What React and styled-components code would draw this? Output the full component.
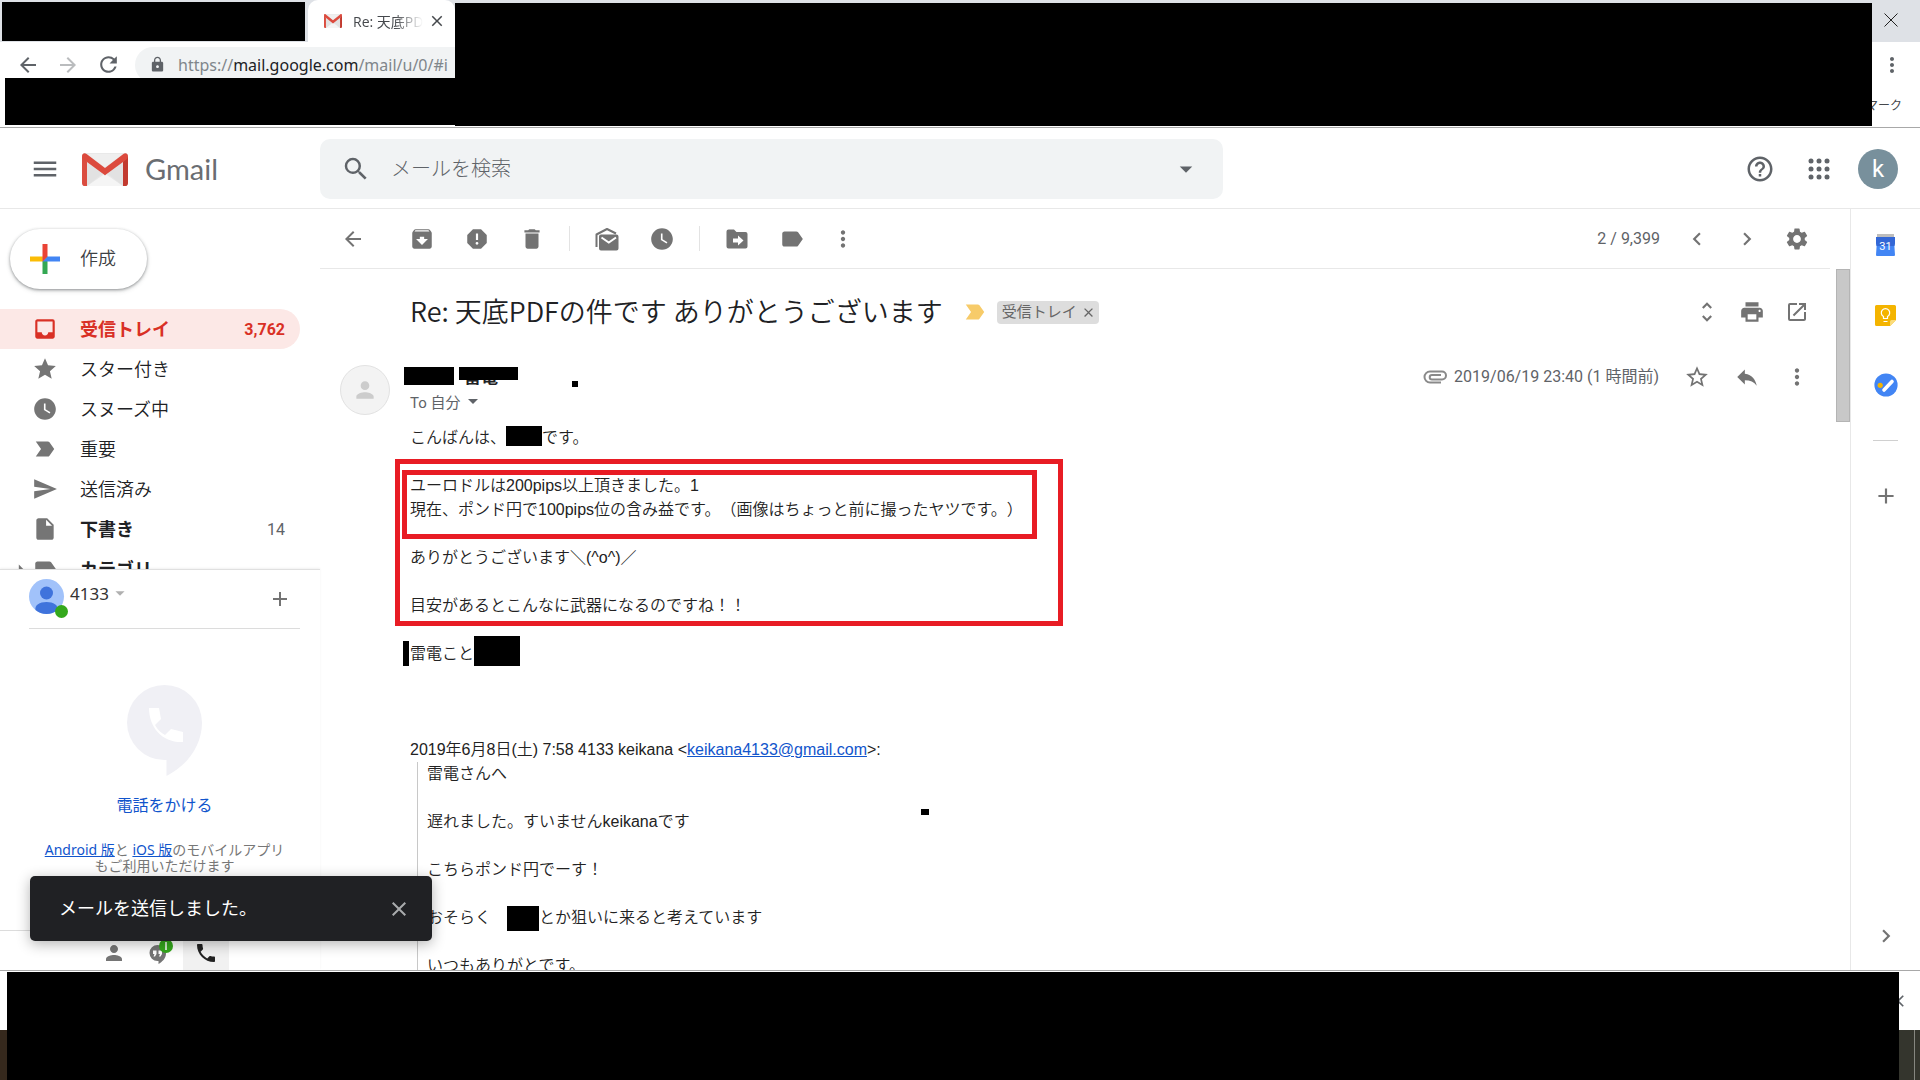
import React from "react";
import styled, { createGlobalStyle } from "styled-components";
import {
    MdAdd, MdArchive, MdArrowBack, MdArrowDropDown, MdArrowForward, MdArrowRight, MdChevronLeft,
    MdChevronRight, MdClose, MdDelete, MdHelpOutline, MdInbox, MdInsertDriveFile, MdLabel,
    MdLabelImportant, MdLock, MdMenu, MdMoreVert, MdOpenInNew, MdPerson, MdPhone, MdPrint,
    MdRefresh, MdReply, MdReport, MdSearch, MdSend, MdSettings, MdStar, MdStarBorder,
    MdUnfoldMore, MdWatchLater,
} from "react-icons/md";

const GlobalStyle = createGlobalStyle`
    * {
        box-sizing: border-box;
    }
    body {
        margin: 0;
        background-color: white;
        color: #202124;
        font-family: Roboto, "Noto Sans CJK JP", sans-serif;
    }
    button, input {
        font-family: inherit;
    }
    a {
        color: #1155cc;
    }
`;

const Page = styled.div`
    position: relative;
    display: flex;
    flex-direction: column;
    height: 100vh;
    overflow: hidden;
`;
const Redaction = styled.span`
    position: absolute;
    background-color: black;
    left: ${(p) => p.$left}px;
    top: ${(p) => p.$top}px;
    width: ${(p) => (p.$width ? `${p.$width}px` : 'auto')};
    height: ${(p) => (p.$height ? `${p.$height}px` : 'auto')};
    right: ${(p) => (p.$right ? `${p.$right}px` : 'auto')};
    bottom: ${(p) => (p.$bottom !== undefined ? `${p.$bottom}px` : 'auto')};
`;
const InlineRedaction = styled.span`
    display: inline-block;
    vertical-align: top;
    background-color: black;
    width: ${(p) => p.$width}px;
    height: ${(p) => p.$height}px;
    margin-top: ${(p) => (p.$tall ? -6 : 0)}px;
`;
const IconButton = styled.button`
    display: flex;
    align-items: center;
    justify-content: center;
    flex: none;
    width: ${(p) => p.$width || 40}px;
    height: 40px;
    padding: 0;
    border: none;
    background: none;
    color: ${(p) => p.$color || '#737373'};
    font-size: ${(p) => p.$size || 26}px;
`;

/* browser frame */
const Browser = styled.div`
    position: relative;
    flex: none;
    border-bottom: 1px solid #a8a8a8;
`;
const TabStrip = styled.div`
    display: flex;
    justify-content: space-between;
    height: 42px;
    padding-left: 308px;
    background-color: #dee1e6;
`;
const Tab = styled.div`
    display: flex;
    align-items: center;
    width: 147px;
    padding-left: 16px;
    border-radius: 10px 10px 0 0;
    background-color: white;
`;
const TabTitle = styled.span`
    width: 70px;
    margin-left: 11px;
    overflow: hidden;
    white-space: nowrap;
    font-family: "Open Sans", "Noto Sans CJK JP", sans-serif;
    font-size: 14px;
    color: #45484c;
    mask-image: linear-gradient(to right, black 60%, transparent);
`;
const NavBar = styled.div`
    display: flex;
    align-items: center;
    height: 45px;
    padding: 0 8px;
`;
const NavButtons = styled.div`
    display: flex;
    width: 127px;
`;
const AddressBar = styled.div`
    display: flex;
    align-items: center;
    flex: 1;
    height: 36px;
    padding-left: 14px;
    margin-right: 60px;
    border-radius: 18px;
    background-color: #f1f3f4;
    color: #5f6368;
    font-family: "Noto Sans", sans-serif;
    font-size: 16px;
`;
const Url = styled.span`
    margin-left: 12px;
    color: #80868b;
`;
const Host = styled.span`
    color: #202124;
`;
const Bookmarks = styled.div`
    height: 40px;
    padding: 7px 18px;
    text-align: right;
    font-family: "Noto Sans CJK JP", sans-serif;
    font-size: 12px;
    line-height: 22px;
    color: #45484c;
`;

/* header */
const Header = styled.header`
    display: flex;
    align-items: center;
    flex: none;
    height: 81px;
    padding: 2px 22px 0 0;
    border-bottom: 1px solid #e8e8e8;
`;
const Brand = styled.div`
    display: flex;
    align-items: center;
    flex: none;
    gap: 17px;
    width: 320px;
    padding-left: 25px;
`;
const BrandName = styled.span`
    font-family: Lato, sans-serif;
    font-size: 29px;
    line-height: 34px;
    color: #6a6d72;
`;
const Search = styled.form`
    display: flex;
    align-items: center;
    flex: 0 1 903px;
    height: 60px;
    padding: 0 17px 0 16px;
    border-radius: 10px;
    background-color: #f1f3f4;
`;
const SearchInput = styled.input`
    flex: 1;
    min-width: 0;
    margin-left: 13px;
    border: none;
    outline: none;
    background: none;
    font-size: 20px;
    font-weight: 300;
    &::placeholder {
        color: #5f6368;
    }
`;
const Account = styled.div`
    display: flex;
    align-items: center;
    gap: 19px;
    margin-left: auto;
`;
const AccountButton = styled.button`
    width: 40px;
    height: 40px;
    padding: 0;
    border: none;
    border-radius: 50%;
    background-color: #78909c;
    color: white;
    font-size: 24px;
`;

const Main = styled.div`
    position: relative;
    display: flex;
    flex: 1;
    min-height: 0;
`;

/* left column */
const Sidebar = styled.aside`
    display: flex;
    flex-direction: column;
    flex: none;
    width: 320px;
    padding-top: 20px;
`;
const Compose = styled.button`
    display: flex;
    align-items: center;
    flex: none;
    gap: 20px;
    width: 137px;
    height: 60px;
    margin: 0 0 20px 10px;
    padding: 0 20px;
    border: none;
    border-radius: 30px;
    background-color: white;
    box-shadow: 0 1px 3px rgba(60, 64, 67, 0.5), 0 2px 5px rgba(60, 64, 67, 0.15);
    color: #3c4043;
    font-size: 18px;
    font-weight: 350;
    line-height: 24px;
    white-space: nowrap;
    svg {
        flex: none;
    }
`;
const Folders = styled.nav`
    flex: 1;
    min-height: 0;
    overflow: hidden;
`;
const Folder = styled.a`
    display: flex;
    align-items: center;
    position: relative;
    height: 40px;
    margin-right: 20px;
    padding: 0 15px 0 32px;
    border-radius: 0 20px 20px 0;
    background-color: ${(p) => (p.$active ? '#fce8e6' : 'transparent')};
    color: ${(p) => (p.$active ? '#d93025' : '#202124')};
    font-size: 18px;
    font-weight: ${(p) => (p.$bold ? 700 : 350)};
    text-decoration: none;
    svg {
        flex: none;
        font-size: 26px;
        color: ${(p) => (p.$active ? '#d93025' : '#757575')};
    }
`;
const FolderName = styled.span`
    flex: 1;
    margin-left: 22px;
    padding-bottom: 2px;
`;
const Count = styled.span`
    font-size: 16px;
    font-weight: ${(p) => (p.$strong ? 700 : 400)};
    color: ${(p) => (p.$strong ? '#d93025' : '#5f6368')};
`;
const Expander = styled.span`
    position: absolute;
    left: 8px;
    top: 8px;
`;
const Hangouts = styled.section`
    flex: none;
    border-top: 1px solid #e0e0e0;
    box-shadow: 0 -1px 2px rgba(0, 0, 0, 0.06);
`;
const ChatUser = styled.div`
    display: flex;
    height: 59px;
    margin: 0 20px 0 29px;
    border-bottom: 1px solid #dcdcdc;
`;
const ChatAvatar = styled.svg`
    flex: none;
    margin-top: 9px;
`;
const ChatName = styled.button`
    display: flex;
    align-items: center;
    align-self: flex-start;
    height: 24px;
    margin: 11px auto 0 0;
    padding: 0;
    border: none;
    background: none;
    font-family: "Noto Sans", sans-serif;
    font-size: 17px;
    color: #333333;
    svg {
        color: #b0b0b0;
    }
`;
const AddChat = styled(IconButton)`
    margin-top: 9px;
`;
const CallPanel = styled.div`
    display: flex;
    flex-direction: column;
    align-items: center;
    height: 301px;
    padding: 56px 20px 0 29px;
    font-family: "Noto Sans", "Noto Sans CJK JP", sans-serif;
`;
const CallLink = styled.a`
    margin: 18px 0 27px;
    font-size: 16px;
    line-height: 20px;
    text-decoration: none;
`;
const CallText = styled.p`
    margin: 0;
    text-align: center;
    font-size: 14px;
    line-height: 16px;
    color: #777777;
`;
const ChatTabs = styled.div`
    display: flex;
    justify-content: center;
    height: 40px;
    border-top: 1px solid #dcdcdc;
`;
const ChatTab = styled.button`
    display: flex;
    align-items: center;
    justify-content: center;
    width: 46px;
    padding: 4px 0 0;
    border: none;
    background-color: ${(p) => (p.$active ? '#f1f1f1' : 'transparent')};
    color: ${(p) => (p.$active ? '#222222' : '#757575')};
    font-size: 24px;
`;

/* message */
const Content = styled.main`
    display: flex;
    flex-direction: column;
    flex: 1;
    min-width: 0;
`;
const Toolbar = styled.div`
    display: flex;
    align-items: center;
    flex: none;
    gap: 15px;
    height: 60px;
    margin-right: 20px;
    padding: 0 13px;
    border-bottom: 1px solid #e8e8e8;
`;
const BackButton = styled(IconButton)`
    margin-right: 14px;
`;
const Divider = styled.span`
    width: 1px;
    height: 25px;
    margin: 0 2px;
    background-color: #e3e3e3;
`;
const Pager = styled.div`
    display: flex;
    align-items: center;
    gap: 10px;
    margin-left: auto;
    font-size: 16px;
    color: #5f6368;
`;
const PagerCount = styled.span`
    margin-right: 7px;
`;
const Scroller = styled.div`
    display: flex;
    flex: 1;
    min-height: 0;
    overflow: hidden;
`;
const Thumb = styled.div`
    flex: none;
    width: 14px;
    height: 153px;
    border: 1px solid #b4b4b4;
    background-color: #c8c8c8;
`;
const Message = styled.article`
    flex: 1;
    min-width: 0;
    padding: 0 19px 0 20px;
`;
const SubjectRow = styled.div`
    display: flex;
    align-items: center;
    height: 86px;
    padding-left: 70px;
    svg {
        flex: none;
    }
`;
const Subject = styled.h2`
    margin: 0 19px 0 0;
    padding-bottom: 2px;
    font-family: "Noto Sans CJK JP", sans-serif;
    font-size: 27px;
    font-weight: 350;
    line-height: 36px;
    white-space: nowrap;
`;
const Tag = styled.span`
    display: flex;
    align-items: center;
    gap: 4px;
    height: 23px;
    margin-left: 9px;
    padding: 0 3px 0 5px;
    border-radius: 4px;
    background-color: #dddddd;
    color: #666666;
    font-size: 15px;
    line-height: 20px;
    white-space: nowrap;
`;
const TagRemove = styled.button`
    display: flex;
    padding: 0;
    border: none;
    background: none;
    color: #666666;
    font-size: 15px;
`;
const Actions = styled.div`
    display: flex;
    gap: ${(p) => p.$gap}px;
    margin-left: auto;
`;
const MessageHead = styled.div`
    display: flex;
    height: 71px;
    padding-top: 10px;
`;
const Avatar = styled.div`
    display: flex;
    align-items: center;
    justify-content: center;
    flex: none;
    width: 50px;
    height: 50px;
    margin-right: 20px;
    border: 1px solid #e2e2e2;
    border-radius: 50%;
    background-color: #f3f3f3;
    color: #cccccc;
`;
const Sender = styled.div`
    position: relative;
`;
const SenderName = styled.div`
    height: 24px;
    padding-left: 54px;
    font-size: 17px;
    font-weight: 700;
    line-height: 24px;
`;
const Recipient = styled.button`
    display: flex;
    align-items: center;
    height: 24px;
    padding: 0;
    border: none;
    background: none;
    color: #5f6368;
    font-size: 15px;
`;
const Meta = styled.div`
    display: flex;
    align-items: center;
    height: 24px;
    margin-left: auto;
    color: #5f6368;
    font-size: 16px;
`;
const MetaDate = styled.time`
    margin: 0 18px 0 7px;
    line-height: 24px;
`;
const Body = styled.div`
    position: relative;
    margin-left: 70px;
    font-family: "Liberation Sans", "Noto Sans CJK JP", sans-serif;
    font-size: 16px;
    font-weight: 350;
    line-height: 24px;
    color: #222222;
    text-spacing-trim: space-all;
`;
const Line = styled.div`
    height: 24px;
    white-space: nowrap;
`;
const Quote = styled.blockquote`
    margin: 0 0 0 7px;
    padding-left: 9px;
    border-left: 1px solid #c8c8c8;
`;
const Highlight = styled.div`
    position: absolute;
    left: ${(p) => p.$left}px;
    top: ${(p) => p.$top}px;
    width: ${(p) => p.$width}px;
    height: ${(p) => p.$height}px;
    border: 5px solid #e81c24;
`;

/* add-on strip on the right */
const AddOns = styled.aside`
    display: flex;
    flex-direction: column;
    align-items: center;
    flex: none;
    gap: 30px;
    width: 70px;
    padding: 16px 0 14px;
    border-left: 1px solid #e8e8e8;
`;
const AddOnRule = styled.span`
    width: 25px;
    height: 1px;
    margin: 5px 0;
    background-color: #d0d0d0;
`;
const Collapse = styled(IconButton)`
    margin-top: auto;
`;

const Toast = styled.div`
    position: absolute;
    left: 30px;
    bottom: 29px;
    display: flex;
    align-items: center;
    justify-content: space-between;
    width: 402px;
    height: 65px;
    padding: 0 13px 0 29px;
    border-radius: 5px;
    background-color: #202124;
    box-shadow: 0 3px 14px rgba(0, 0, 0, 0.3);
    color: white;
    font-size: 18px;
    line-height: 24px;
`;

/* bottom edge of the browser and the desktop below */
const Bottom = styled.footer`
    position: relative;
    flex: none;
    border-top: 1px solid #a8a8a8;
`;
const Shelf = styled.div`
    display: flex;
    justify-content: flex-end;
    align-items: center;
    height: 59px;
    padding-right: 12px;
    color: #5f6368;
    font-size: 20px;
`;
const Taskbar = styled.div`
    height: 50px;
    padding-right: 5px;
    background: linear-gradient(to right, #36291d 50%, #34352d 50%);
    &::after {
        content: "";
        display: block;
        width: 1px;
        height: 50px;
        margin-left: auto;
        background-color: #85867f;
    }
`;

const GmailLogo = ({ width, height }) => (
    <svg width={width} height={height} viewBox="0 0 46 32" preserveAspectRatio="none">
        <rect width="46" height="32" rx="3" fill="#e9e9e9" />
        <path d="M5 32L23 18l18 14z" fill="#f5f5f5" />
        <path d="M5 8l18 14L41 8v24L23 20 5 32z" fill="#dedede" opacity=".6" />
        <path d="M5 1h36L23 14z" fill="#efefef" />
        <path d="M0 3v26a3 3 0 003 3h2V8z" fill="#db4d40" />
        <path d="M46 3v26a3 3 0 01-3 3h-2V8z" fill="#c23a2f" />
        <path d="M0 3C0 .6 2.6-.6 4.600 1L23 14.500 41.400 1C43.400-.6 46 .6 46 3c0 1.500-.6 2.500-1.600 3.300L23 21.500 1.600 6.300C.6 5.500 0 4.500 0 3z" fill="#dc4a3d" />
    </svg>
);

const ComposeIcon = () => (
    <svg width="30" height="30" viewBox="0 0 30 30">
        <path d="M12.500 0h5v12.500l-5 5z" fill="#ea4335" />
        <path d="M12.500 17.500L17.500 12.500V30h-5z" fill="#34a853" />
        <path d="M0 12.500h12.500v5H0z" fill="#fbbc05" />
        <path d="M17.500 12.500H30v5H12.500z" fill="#4285f4" />
        <path d="M12.500 12.500h5l-5 5z" fill="#ea4335" />
    </svg>
);

const AppsIcon = () => (
    <svg width="22" height="22" viewBox="0 0 22 22" fill="currentColor">
        {[3, 11, 19].map((y) => [3, 11, 19].map((x) => (
            <circle key={`${x}-${y}`} cx={x} cy={y} r="2.500" />
        )))}
    </svg>
);

const UnreadIcon = () => (
    <svg width="24" height="24" viewBox="0 0 24 24">
        <path d="M1.500 20V7.500L12 2l9 4.500" fill="none" stroke="#737373" strokeWidth="2" strokeLinejoin="round" />
        <path d="M6 7.500h15.500a2 2 0 012 2v12a2 2 0 01-2 2H6a2 2 0 01-2-2v-12a2 2 0 012-2z" fill="#737373" />
        <path d="M6.500 10.500l7.300 5L21 10.500" fill="none" stroke="white" strokeWidth="2" />
    </svg>
);

const MoveIcon = () => (
    <svg width="22" height="22" viewBox="0 0 22 22">
        <path d="M2.500 1.500H8l2.500 2.500h9a2 2 0 012 2v12.500a2 2 0 01-2 2h-17a2 2 0 01-2-2v-15a2 2 0 012-2z" fill="#737373" />
        <path d="M7 10.500h5V7.500l5.500 5-5.500 5v-3H7z" fill="white" />
    </svg>
);

const ClipIcon = () => (
    <svg width="24" height="14" viewBox="0 0 24 14" fill="none" stroke="#8a8a8a" strokeWidth="2">
        <path d="M18 12.500H7A5.500 5.500 0 017 1.500h12a3.800 3.800 0 010 8H9a2.300 2.300 0 010-4.600h9" />
    </svg>
);

const CalendarIcon = () => (
    <svg width="21" height="22" viewBox="0 0 21 22">
        <path d="M2 0h17v4H2z" fill="#bdbdbd" />
        <path d="M1 3h19v6l-.6 3 .6 9a1 1 0 01-1 1H2a1 1 0 01-1-1l.6-9L1 9z" fill="#4285f4" />
        <path d="M1 3h19v6l-.6 3H1.600L1 9z" fill="#3367d6" />
        <text x="10.500" y="16" textAnchor="middle" fontFamily="Roboto" fontSize="11" fill="white">31</text>
    </svg>
);

const KeepIcon = () => (
    <svg width="21" height="21" viewBox="0 0 21 21">
        <path d="M1.500 0h18A1.500 1.500 0 0121 1.500V15l-6 6H1.500A1.500 1.500 0 010 19.500v-18A1.500 1.500 0 011.500 0z" fill="#f4b400" />
        <path d="M21 15l-6 6v-4.500a1.500 1.500 0 011.500-1.500z" fill="#fbdc7b" />
        <path d="M8.500 13.500v-2a4.200 4.200 0 114 0v2zM8.500 16.500h4" fill="none" stroke="white" strokeWidth="1.200" />
    </svg>
);

const TasksIcon = () => (
    <svg width="24" height="24" viewBox="0 0 24 24">
        <circle cx="12" cy="12" r="11.600" fill="#4285f4" />
        <path d="M10 17l8-8.500" stroke="white" strokeWidth="3.600" strokeLinecap="round" />
        <circle cx="6.200" cy="12.300" r="2.600" fill="#f4b400" />
    </svg>
);

const CallBubble = () => (
    <svg width="75" height="92" viewBox="0 0 75 92">
        <path d="M37.500 0A37.500 37.500 0 0175 37.500C75 62 59 81 39.500 91V75h-2a37.500 37.500 0 010-75z" fill="#f0f0f5" />
        <path d="M22 23h10l2 11-6 6c3 5 6 8 10 10l6-6 12 3v10C36 58 22 43 22 23z" fill="white" />
    </svg>
);

const HangoutsIcon = () => (
    <svg width="26" height="28" viewBox="0 0 26 28">
        <path d="M10.500 6a8.500 8.500 0 018.500 8.500c0 5-4 8.500-7.500 10.500v-3h-1a8 8 0 010-16z" fill="#757575" />
        <path d="M6 11.500h3.500V15L8 17.500H6.500L7.500 15H6zM11.500 11.500H15V15l-1.500 2.500H12l1-2.500h-1.500z" fill="white" />
        <circle cx="19" cy="7" r="7" fill="#34a81c" />
        <path d="M19 3v8" stroke="white" strokeWidth="1.500" />
    </svg>
);

const folders = [
    { name: '受信トレイ', icon: MdInbox, count: '3,762', active: true, bold: true },
    { name: 'スター付き', icon: MdStar },
    { name: 'スヌーズ中', icon: MdWatchLater },
    { name: '重要', icon: MdLabelImportant },
    { name: '送信済み', icon: MdSend },
    { name: '下書き', icon: MdInsertDriveFile, count: '14', bold: true },
    { name: 'カテゴリ', icon: MdLabel, bold: true, expandable: true },
];

const BrowserFrame = () => (
    <Browser>
        <TabStrip>
            <Tab>
                <GmailLogo width={18} height={14} />
                <TabTitle>Re: 天底PD</TabTitle>
                <IconButton aria-label="タブを閉じる" $width={28} $size={18} $color="#45484c"><MdClose /></IconButton>
            </Tab>
            <IconButton aria-label="閉じる" $width={58} $color="#222222">
                <svg width="14" height="14" viewBox="0 0 14 14"><path d="M.5.5l13 13M13.500.5l-13 13" stroke="currentColor" /></svg>
            </IconButton>
        </TabStrip>
        <NavBar>
            <NavButtons>
                <IconButton aria-label="戻る" $size={24} $color="#5f6368"><MdArrowBack /></IconButton>
                <IconButton aria-label="進む" $size={24} $color="#babcbe"><MdArrowForward /></IconButton>
                <IconButton aria-label="再読み込み" $size={25} $color="#5f6368"><MdRefresh /></IconButton>
            </NavButtons>
            <AddressBar>
                <MdLock size={17} />
                <Url>https://<Host>mail.google.com</Host>/mail/u/0/#i</Url>
            </AddressBar>
            <IconButton aria-label="メニュー" $size={24} $color="#5f6368"><MdMoreVert /></IconButton>
        </NavBar>
        <Bookmarks>マーク</Bookmarks>
        <Redaction $left={2} $top={2} $width={303} $height={39} />
        <Redaction $left={5} $top={78} $width={450} $height={47} />
        <Redaction $left={455} $top={3} $right={48} $height={123} />
    </Browser>
);

const MailSidebar = () => (
    <Sidebar>
        <Compose><ComposeIcon />作成</Compose>
        <Folders>
            {folders.map((f) => (
                <Folder key={f.name} href="#" $active={f.active} $bold={f.bold}>
                    {f.expandable && <Expander><MdArrowRight /></Expander>}
                    <f.icon />
                    <FolderName>{f.name}</FolderName>
                    {f.count && <Count $strong={f.active}>{f.count}</Count>}
                </Folder>
            ))}
        </Folders>
        <Hangouts>
            <ChatUser>
                <ChatAvatar width="41" height="41" viewBox="0 0 41 41">
                    <circle cx="17.500" cy="17.500" r="17.500" fill="#a1c2fa" />
                    <circle cx="17.500" cy="14" r="6.500" fill="#3f73dc" />
                    <path d="M6.500 31c-1-5 4-8 11-8s12 3 11 8a17.500 17.500 0 01-22 0z" fill="#3f73dc" />
                    <circle cx="32.500" cy="32.500" r="6.500" fill="#34a81c" />
                </ChatAvatar>
                <ChatName>4133<MdArrowDropDown size={22} /></ChatName>
                <AddChat aria-label="新しい会話" $size={24}><MdAdd /></AddChat>
            </ChatUser>
            <CallPanel>
                <CallBubble />
                <CallLink href="#">電話をかける</CallLink>
                <CallText>
                    <a href="#">Android 版</a>と <a href="#">iOS 版</a>のモバイルアプリ<br />もご利用いただけます
                </CallText>
            </CallPanel>
            <ChatTabs>
                <ChatTab aria-label="連絡先"><MdPerson /></ChatTab>
                <ChatTab aria-label="会話"><HangoutsIcon /></ChatTab>
                <ChatTab aria-label="通話" $active><MdPhone /></ChatTab>
            </ChatTabs>
        </Hangouts>
    </Sidebar>
);

const MailToolbar = () => (
    <Toolbar>
        <BackButton aria-label="受信トレイに戻る" $size={24}><MdArrowBack /></BackButton>
        <IconButton aria-label="アーカイブ"><MdArchive /></IconButton>
        <IconButton aria-label="迷惑メールを報告"><MdReport /></IconButton>
        <IconButton aria-label="削除"><MdDelete /></IconButton>
        <Divider />
        <IconButton aria-label="未読にする"><UnreadIcon /></IconButton>
        <IconButton aria-label="スヌーズ"><MdWatchLater /></IconButton>
        <Divider />
        <IconButton aria-label="移動"><MoveIcon /></IconButton>
        <IconButton aria-label="ラベル"><MdLabel /></IconButton>
        <IconButton aria-label="その他" $width={32}><MdMoreVert /></IconButton>
        <Pager>
            <PagerCount>2 / 9,399</PagerCount>
            <IconButton aria-label="新しい"><MdChevronLeft /></IconButton>
            <IconButton aria-label="古い"><MdChevronRight /></IconButton>
            <IconButton aria-label="設定"><MdSettings /></IconButton>
        </Pager>
    </Toolbar>
);

const MailMessage = () => (
    <Message>
        <SubjectRow>
            <Subject>Re: 天底PDFの件です ありがとうございます</Subject>
            <MdLabelImportant size={26} color="#f7cb69" />
            <Tag>受信トレイ<TagRemove aria-label="ラベルを削除"><MdClose /></TagRemove></Tag>
            <Actions $gap={5}>
                <IconButton aria-label="すべて展開"><MdUnfoldMore /></IconButton>
                <IconButton aria-label="すべて印刷"><MdPrint /></IconButton>
                <IconButton aria-label="新しいウィンドウ" $size={24}><MdOpenInNew /></IconButton>
            </Actions>
        </SubjectRow>
        <MessageHead>
            <Avatar><MdPerson size={26} /></Avatar>
            <Sender>
                <SenderName>雷電</SenderName>
                <Recipient>To 自分<MdArrowDropDown size={24} /></Recipient>
                <Redaction $left={-6} $top={2} $width={50} $height={18} />
                <Redaction $left={49} $top={2} $width={59} $height={13} />
                <Redaction $left={162} $top={16} $width={6} $height={6} />
            </Sender>
            <Meta>
                <ClipIcon />
                <MetaDate>2019/06/19 23:40 (1 時間前)</MetaDate>
                <Actions $gap={10}>
                    <IconButton aria-label="スター"><MdStarBorder /></IconButton>
                    <IconButton aria-label="返信"><MdReply /></IconButton>
                    <IconButton aria-label="その他"><MdMoreVert /></IconButton>
                </Actions>
            </Meta>
        </MessageHead>
        <Body>
            <Line>こんばんは、<InlineRedaction $width={36} $height={20} />です。</Line>
            <Line />
            <Line>ユーロドルは200pips以上頂きました。1</Line>
            <Line>現在、ポンド円で100pips位の含み益です。（画像はちょっと前に撮ったヤツです。）</Line>
            <Line />
            <Line>ありがとうございます＼(^o^)／</Line>
            <Line />
            <Line>目安があるとこんなに武器になるのですね！！</Line>
            <Line />
            <Line>雷電こと<InlineRedaction $width={46} $height={30} $tall /></Line>
            <Line />
            <Line />
            <Line />
            <Line>2019年6月8日(土) 7:58 4133 keikana &lt;<a href="mailto:keikana4133@gmail.com">keikana4133@gmail.com</a>&gt;:</Line>
            <Quote>
                <Line>雷電さんへ</Line>
                <Line />
                <Line>遅れました。すいませんkeikanaです</Line>
                <Line />
                <Line>こちらポンド円でーす！</Line>
                <Line />
                <Line>おそらく　<InlineRedaction $width={32} $height={25} />とか狙いに来ると考えています</Line>
                <Line />
                <Line>いつもありがとです。</Line>
            </Quote>
            <Redaction $left={-7} $top={215} $width={6} $height={25} />
            <Redaction $left={511} $top={383} $width={8} $height={6} />
            <Highlight $left={-15} $top={33} $width={668} $height={167} />
            <Highlight $left={-8} $top={44} $width={635} $height={69} />
        </Body>
    </Message>
);

const App = () => {
    return (
        <>
            <GlobalStyle />
            <Page>
                <BrowserFrame />
                <Header>
                    <Brand>
                        <IconButton aria-label="メインメニュー" $size={30} $color="#5f6368"><MdMenu /></IconButton>
                        <GmailLogo width={46} height={33} />
                        <BrandName>Gmail</BrandName>
                    </Brand>
                    <Search>
                        <IconButton type="button" aria-label="検索" $size={30} $color="#5f6368"><MdSearch /></IconButton>
                        <SearchInput placeholder="メールを検索" aria-label="メールを検索" />
                        <IconButton type="button" aria-label="検索オプション" $size={30} $color="#5f6368"><MdArrowDropDown /></IconButton>
                    </Search>
                    <Account>
                        <IconButton aria-label="ヘルプ" $size={30} $color="#5f6368"><MdHelpOutline /></IconButton>
                        <IconButton aria-label="アプリ" $color="#5f6368"><AppsIcon /></IconButton>
                        <AccountButton>k</AccountButton>
                    </Account>
                </Header>
                <Main>
                    <MailSidebar />
                    <Content>
                        <MailToolbar />
                        <Scroller>
                            <MailMessage />
                            <Thumb />
                        </Scroller>
                    </Content>
                    <AddOns>
                        <IconButton aria-label="カレンダー"><CalendarIcon /></IconButton>
                        <IconButton aria-label="Keep"><KeepIcon /></IconButton>
                        <IconButton aria-label="ToDo リスト"><TasksIcon /></IconButton>
                        <AddOnRule />
                        <IconButton aria-label="アドオンを取得"><MdAdd /></IconButton>
                        <Collapse aria-label="サイドパネルを非表示"><MdChevronRight /></Collapse>
                    </AddOns>
                    <Toast>
                        メールを送信しました。
                        <IconButton aria-label="閉じる" $size={24} $color="#a9abad"><MdClose /></IconButton>
                    </Toast>
                </Main>
                <Bottom>
                    <Shelf><MdClose /></Shelf>
                    <Taskbar />
                    <Redaction $left={7} $top={1} $right={21} $bottom={0} />
                </Bottom>
            </Page>
        </>
    )
}
export default App
